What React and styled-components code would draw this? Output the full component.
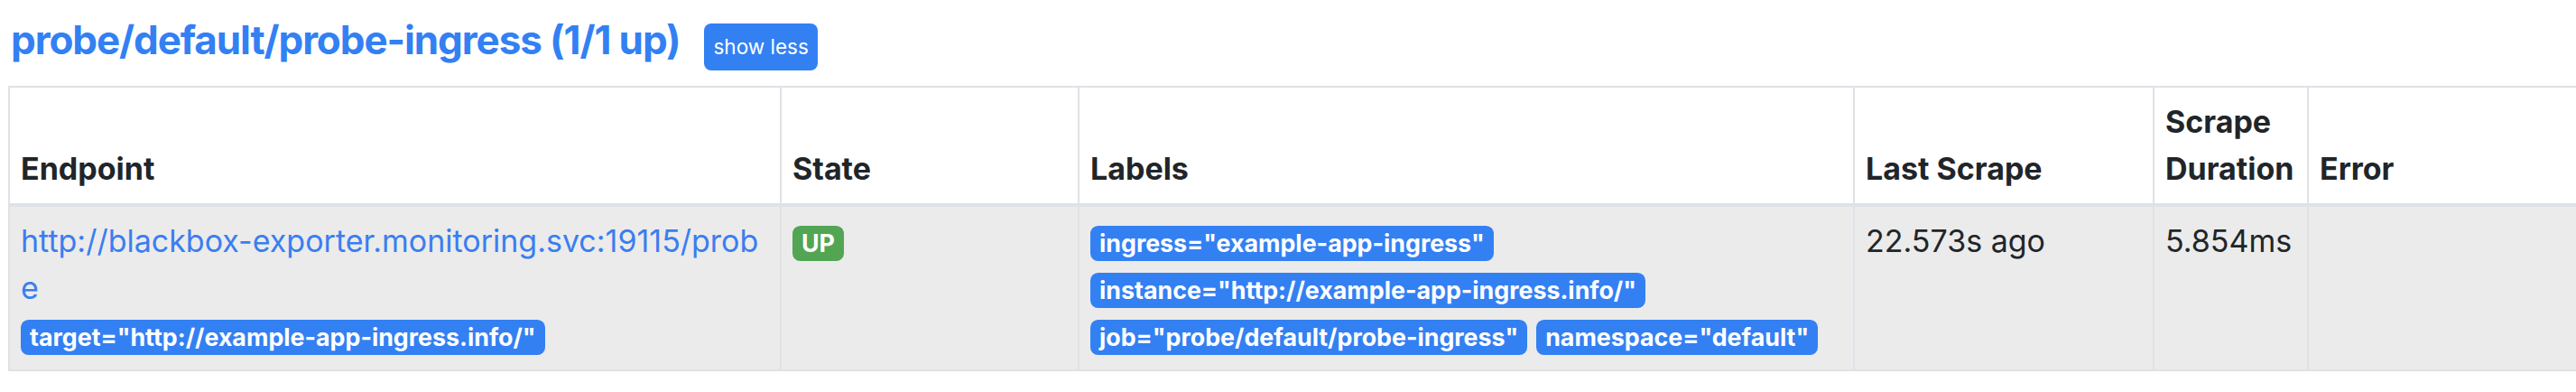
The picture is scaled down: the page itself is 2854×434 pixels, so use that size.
import React from "react";
import styled, { createGlobalStyle } from "styled-components";

const Global = createGlobalStyle`
  html, body { margin: 0; padding: 0; background: #fff; overflow: hidden; }
  body { font-family: Inter, "Liberation Sans", Arial, sans-serif; color: #212529; }
`;

const Page = styled.div`
  padding: 0 0 0 9px;
  width: 3200px;
`;

const TitleRow = styled.div`
  display: flex;
  align-items: baseline;
  gap: 27px;
  padding: 18px 0 0 3px;
  margin-bottom: 17px;
`;

const Title = styled.a`
  font-size: 44px;
  font-weight: 700;
  line-height: 1.2;
  color: #3380f3;
  text-decoration: none;
  letter-spacing: -1.1px;
`;

const SmallButton = styled.button`
  font-family: inherit;
  font-size: 22.5px;
  line-height: 36px;
  padding: 8px 10px;
  border: none;
  border-radius: 8px;
  background: #3380f3;
  color: #fff;
`;

const Table = styled.table`
  border-collapse: collapse;
  table-layout: fixed;
  width: 3000px;
  font-size: 34px;
  line-height: 52px;
`;

const Th = styled.th`
  text-align: left;
  vertical-align: bottom;
  font-weight: 700;
  padding: 12px;
  border: 2px solid #dee2e6;
  border-bottom-width: 4px;
`;

const Td = styled.td`
  vertical-align: top;
  padding: 12px;
  border: 2px solid #dee2e6;
  background: #ebebeb;
  word-break: break-all;
`;

const Link = styled.a`
  color: #3a7ef0;
  text-decoration: none;
`;

const Badge = styled.span`
  display: inline-block;
  font-size: 26.8px;
  font-weight: 700;
  line-height: 1;
  padding: 6px 10px;
  border-radius: 8.6px;
  color: #fff;
  background: ${(p) => (p.$tone === "success" ? "#52a552" : "#3380f3")};
  margin-right: ${(p) => (p.$gap ? "10px" : "0")};
  white-space: nowrap;
  vertical-align: middle;
`;

const labels = [
  'ingress="example-app-ingress"',
  'instance="http://example-app-ingress.info/"',
  'job="probe/default/probe-ingress"',
  'namespace="default"',
];

export default function App() {
  return (
    <>
      <Global />
      <Page>
        <TitleRow>
          <Title href="#probe/default/probe-ingress">probe/default/probe-ingress (1/1 up)</Title>
          <SmallButton>show less</SmallButton>
        </TitleRow>
        <Table>
          <colgroup>
            <col style={{ width: 855 }} />
            <col style={{ width: 330 }} />
            <col style={{ width: 859 }} />
            <col style={{ width: 332 }} />
            <col style={{ width: 171 }} />
            <col style={{ width: 453 }} />
          </colgroup>
          <thead>
            <tr>
              <Th>Endpoint</Th>
              <Th>State</Th>
              <Th>Labels</Th>
              <Th>Last Scrape</Th>
              <Th>Scrape Duration</Th>
              <Th>Error</Th>
            </tr>
          </thead>
          <tbody>
            <tr>
              <Td>
                <Link href="#">http://blackbox-exporter.monitoring.svc:19115/probe</Link>
                <br />
                <Badge>target="http://example-app-ingress.info/"</Badge>
              </Td>
              <Td>
                <Badge $tone="success">UP</Badge>
              </Td>
              <Td>
                {labels.map((l) => (
                  <Badge key={l} $gap>
                    {l}
                  </Badge>
                ))}
              </Td>
              <Td>22.573s ago</Td>
              <Td>5.854ms</Td>
              <Td></Td>
            </tr>
          </tbody>
        </Table>
      </Page>
    </>
  );
}
